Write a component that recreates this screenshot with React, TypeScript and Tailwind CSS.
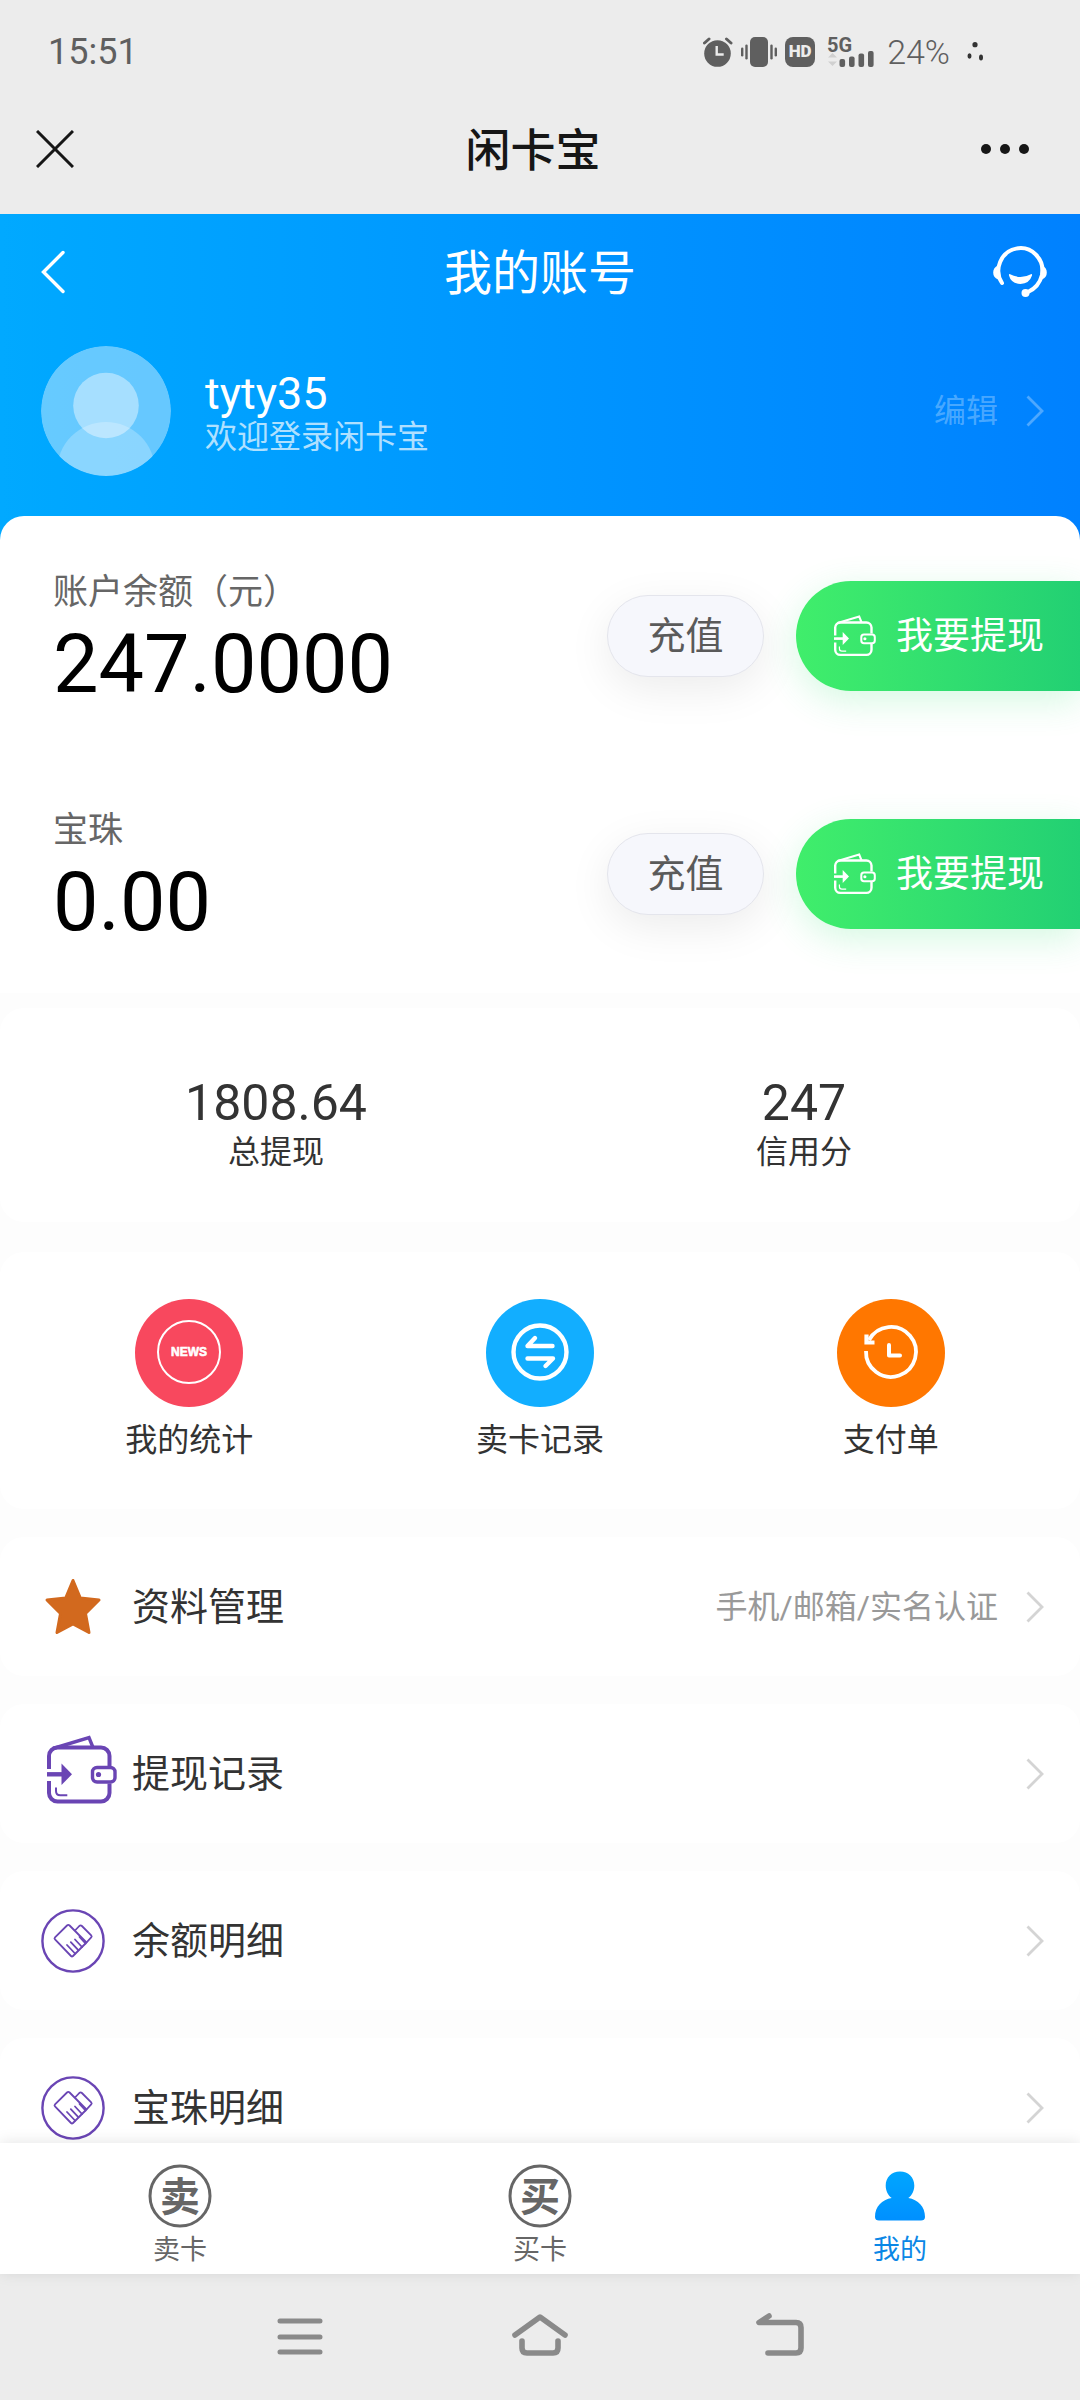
import React from 'react';
import { clsx } from 'clsx';

type IconProps = { className?: string };

function WalletIcon({ className }: IconProps) {
  return (
    <svg viewBox="0 0 70 70" fill="none" stroke="currentColor" strokeWidth="4" className={className}>
      <path d="M2 34V21a8.500 8.500 0 0 1 8.500-8.500H54a8.500 8.500 0 0 1 8.500 8.500v10M62.500 48.500V58a8.500 8.500 0 0 1-8.500 8.500H10.500A8.500 8.500 0 0 1 2 58V46" />
      <path d="M6 13.500 42 2.500l4 10" strokeWidth="3.400" />
      <path d="M0 39.300h17" strokeWidth="4.400" />
      <path d="M14.500 28.500 25 39.300 14.500 50z" fill="currentColor" stroke="none" />
      <rect x="45.500" y="32.500" width="22.500" height="14.500" rx="4.500" strokeWidth="3.400" />
      <circle cx="51.500" cy="39.500" r="2.600" fill="currentColor" stroke="none" />
      <path d="M9 52.500v3.500q0 4.300 4.300 4.300h7" strokeWidth="2" />
    </svg>
  );
}

function HandshakeIcon({ className }: IconProps) {
  return (
    <svg viewBox="0 0 64 64" fill="none" stroke="currentColor" strokeWidth="1.800" strokeLinejoin="round" className={className}>
      <circle cx="32" cy="32" r="30.600" strokeWidth="2.400" />
      <path d="M14 28.300 26 16.500q1.300-1.200 2.600 0L45.500 33.500 32 47q-1 1-2 0L14 30.300q-1-1 0-2z" />
      <path d="M34 21.500 38.300 17q1.300-1.200 2.600 0l9.300 9.300q1 1 0 2L45.500 33.500" />
      <path d="M26 36l8 8.500M29.800 33.200l7.500 8M34 30.500l7 7.500M38.500 28l6 6.500" strokeLinecap="round" />
    </svg>
  );
}

function StarIcon({ className }: IconProps) {
  return (
    <svg viewBox="0 0 64 64" fill="currentColor" stroke="currentColor" strokeWidth="3" strokeLinejoin="round" className={className}>
      <path d="M32 5.500 39.300 23 58 25 44.500 38.500 48 57.500 32 49 16 57.500 19.500 38.500 6 25 24.700 23z" />
    </svg>
  );
}

function ChevronRight({ className }: IconProps) {
  return (
    <svg viewBox="0 0 18 32" fill="none" stroke="currentColor" strokeWidth="2.800" className={clsx('h-8 w-[18px] shrink-0', className)}>
      <path d="M1.500 1.500 16 16 1.500 30.500" />
    </svg>
  );
}

function HeadsetIcon() {
  return (
    <svg viewBox="0 0 56 52" fill="none" stroke="currentColor" strokeWidth="4" strokeLinecap="round" className="h-[52px] w-14">
      <path d="M10 37A22 22.500 0 1 1 50 29Q47 41 36 46" />
      <path d="M6 19.500a7.500 7.500 0 0 0 0 14l2 2V18zM50 19.500a7.500 7.500 0 0 1 0 14l-2 2 1-17z" fill="currentColor" stroke="none" />
      <circle cx="33.500" cy="47" r="4" fill="currentColor" stroke="none" />
      <path d="M17.500 28Q28.500 34 39.500 28q.8 0 .5 1.500Q37.500 37.500 28.500 38 19 37.500 17 29.500q-.3-1.500.5-1.500z" fill="currentColor" stroke="none" />
    </svg>
  );
}

function StatusBar() {
  return (
    <div className="flex h-[84px] items-center justify-between pt-5 pr-24 pl-12 text-[#5f5f5f]">
      <span className="text-[36px] leading-none">15:51</span>
      <div className="flex items-center gap-2">
        <svg viewBox="0 0 30 30" fill="none" className="h-[30px] w-[30px]">
          <circle cx="14.500" cy="16.500" r="13.300" fill="currentColor" />
          <path d="M1.500 6 6 2M28 6l-4.500-4" stroke="currentColor" strokeWidth="3" strokeLinecap="round" />
          <path d="M13.700 9v8.500h7" stroke="#ececec" strokeWidth="2.400" />
        </svg>
        <svg viewBox="0 0 36 30" fill="currentColor" className="h-[30px] w-9">
          <rect x="9" width="18" height="30" rx="5" />
          <rect x="4.300" y="7.500" width="2.400" height="15" rx="1.200" />
          <rect y="10.500" width="2.400" height="9" rx="1.200" />
          <rect x="29.300" y="7.500" width="2.400" height="15" rx="1.200" />
          <rect x="33.600" y="10.500" width="2.400" height="9" rx="1.200" />
        </svg>
        <span className="flex h-[30px] w-[30px] items-center justify-center rounded-lg bg-[#5f5f5f] text-[17px] font-black text-[#ececec]">
          HD
        </span>
        <svg viewBox="0 -8 48 46" fill="currentColor" className="ml-1 h-[46px] w-12">
          <text x="0" y="14.500" fontSize="20" fontWeight="700">5G</text>
          <path d="m5.500 16 4.500 4.500H1zM5.500 29 1 24.500h9z" fill="#d0d0d0" />
          <rect x="12.500" y="22" width="5.600" height="8" rx="2" />
          <rect x="22" y="19.500" width="5.600" height="10.500" rx="2" />
          <rect x="31.500" y="16.500" width="5.600" height="13.500" rx="2" />
          <rect x="41" y="14" width="5.600" height="16" rx="2" />
        </svg>
        <span className="ml-1 text-[34px] leading-none font-light">24%</span>
        <svg viewBox="0 0 18 20" fill="#333" className="ml-2 h-5 w-[18px]">
          <circle cx="9" cy="2.700" r="2.600" />
          <ellipse cx="3.500" cy="14" rx="2" ry="2.700" />
          <ellipse cx="15" cy="15.500" rx="2" ry="3" />
        </svg>
      </div>
    </div>
  );
}

function TitleBar() {
  return (
    <div className="grid h-[130px] grid-cols-[1fr_auto_1fr] items-center pr-[50px] pl-9 text-[#161616]">
      <button type="button" aria-label="关闭" className="justify-self-start">
        <svg viewBox="0 0 38 38" stroke="currentColor" strokeWidth="3" className="h-[38px] w-[38px]">
          <path d="M1 1l36 36M37 1 1 37" />
        </svg>
      </button>
      <span className="pt-1 text-[45px] leading-none font-medium">闲卡宝</span>
      <button type="button" aria-label="更多" className="justify-self-end">
        <svg viewBox="0 0 50 12" fill="currentColor" className="h-3 w-[50px]">
          <circle cx="6" cy="6" r="5" />
          <circle cx="25" cy="6" r="5" />
          <circle cx="44" cy="6" r="5" />
        </svg>
      </button>
    </div>
  );
}

function AccountHeader() {
  return (
    <header className="bg-linear-to-r from-[#01a9ff] to-[#0081ff] pb-16 text-white">
      <div className="grid h-[116px] grid-cols-[1fr_auto_1fr] items-center px-8">
        <button type="button" aria-label="返回" className="justify-self-start">
          <svg viewBox="0 0 56 44" fill="none" stroke="currentColor" strokeWidth="3.400" strokeLinecap="round" className="h-11 w-14">
            <path d="M31 2.500 11.500 22 31 41.500" />
          </svg>
        </button>
        <h1 className="pt-1 text-[48px] leading-none">我的账号</h1>
        <button type="button" aria-label="客服" className="justify-self-end">
          <HeadsetIcon />
        </button>
      </div>
      <div className="flex items-center pt-4 pr-9 pl-[41px]">
        <svg viewBox="0 0 130 130" className="h-[130px] w-[130px] shrink-0">
          <clipPath id="avatar"><circle cx="65" cy="65" r="65" /></clipPath>
          <g clipPath="url(#avatar)" fill="#fff">
            <circle cx="65" cy="65" r="65" fillOpacity=".4" />
            <circle cx="65" cy="59.500" r="32.800" fillOpacity=".42" />
            <circle cx="65" cy="125" r="49" fillOpacity=".24" />
          </g>
        </svg>
        <div className="ml-[34px] flex-1 pt-2">
          <p className="text-[45px] leading-[44px]">tyty35</p>
          <p className="text-[32px] leading-[42px] text-white/70">欢迎登录闲卡宝</p>
        </div>
        <a href="#edit" className="flex items-center gap-7 text-[32px] text-white/30">
          编辑
          <ChevronRight />
        </a>
      </div>
    </header>
  );
}

const balances = [
  { label: '账户余额（元）', amount: '247.0000' },
  { label: '宝珠', amount: '0.00' },
];

function Balances() {
  return (
    <section className="relative -mt-6 rounded-t-3xl bg-white pt-px">
      {balances.map((item) => (
        <div key={item.label} className="flex h-[238px] items-center">
          <div className="flex-1 pt-2 pl-[53px]">
            <p className="pt-px text-[35px] leading-[48px] text-[#666]">{item.label}</p>
            <p className="text-[81px] leading-[96px] text-black">{item.amount}</p>
          </div>
          <button
            type="button"
            className="mr-8 h-[82px] w-[157px] rounded-full border border-[#e4e5ec] bg-[#f6f7fc] text-[38px] leading-none text-[#5a5a5a] shadow-[0_12px_44px_rgba(0,0,0,0.08)]"
          >
            充值
          </button>
          <button
            type="button"
            className="flex h-[110px] items-center gap-5 rounded-l-full bg-linear-to-r from-[#40ee6b] to-[#22d073] pr-9 pl-[38px] text-[37px] leading-none text-white shadow-[0_10px_36px_rgba(46,224,110,0.2)]"
          >
            <WalletIcon className="h-[42px] w-[42px]" />
            我要提现
          </button>
        </div>
      ))}
    </section>
  );
}

const stats = [
  { label: '总提现', value: '1808.64' },
  { label: '信用分', value: '247' },
];

function Stats() {
  return (
    <section className="mt-[15px] grid grid-cols-2 rounded-3xl bg-white px-3 pt-[67px] pb-[49px] text-center text-[#333]">
      {stats.map((item) => (
        <div key={item.label}>
          <p className="text-[50px] leading-[56px]">{item.value}</p>
          <p className="text-[32px] leading-[42px]">{item.label}</p>
        </div>
      ))}
    </section>
  );
}

const shortcuts = [
  {
    label: '我的统计',
    color: 'bg-[#f8485e]',
    icon: (
      <>
        <circle cx="54" cy="53" r="31" strokeWidth="2" />
        <text x="54" y="57" textAnchor="middle" fontSize="12" fontWeight="700" fill="#fff" stroke="#fff" strokeWidth=".6" className="font-['Liberation_Sans',sans-serif]">
          NEWS
        </text>
      </>
    ),
  },
  {
    label: '卖卡记录',
    color: 'bg-[#12aeff]',
    icon: (
      <>
        <circle cx="54" cy="53" r="26.500" strokeWidth="4.400" />
        <path d="M66.500 47H41.500L49 39M41.500 59.500H67L59.500 67" strokeWidth="4.400" />
      </>
    ),
  },
  {
    label: '支付单',
    color: 'bg-[#ff7700]',
    icon: (
      <>
        <path d="M29 52A25 25 0 1 0 32 41" strokeWidth="3.800" strokeLinecap="butt" />
        <path d="M29.500 35.500v8h8" strokeWidth="4.200" strokeLinecap="butt" strokeLinejoin="miter" />
        <path d="M52 46v10.500h11" strokeWidth="4" />
      </>
    ),
  },
];

function Shortcuts() {
  return (
    <section className="mt-[30px] grid grid-cols-3 rounded-3xl bg-white px-[14px] pt-[47px] pb-12">
      {shortcuts.map((item) => (
        <a key={item.label} href="#shortcut" className="flex flex-col items-center gap-3 text-[#333]">
          <span className={clsx('rounded-full', item.color)}>
            <svg viewBox="0 0 108 108" fill="none" stroke="#fff" strokeLinecap="round" strokeLinejoin="round" className="h-[108px] w-[108px]">
              {item.icon}
            </svg>
          </span>
          <span className="text-[32px] leading-[42px]">{item.label}</span>
        </a>
      ))}
    </section>
  );
}

const menu = [
  { label: '资料管理', detail: '手机/邮箱/实名认证', icon: <StarIcon className="h-16 w-16 text-[#d2691e]" /> },
  { label: '提现记录', icon: <WalletIcon className="mb-2 ml-1.5 h-[70px] w-[70px] text-[#6a45b4]" /> },
  { label: '余额明细', icon: <HandshakeIcon className="h-16 w-16 text-[#6a45b4]" /> },
  { label: '宝珠明细', icon: <HandshakeIcon className="h-16 w-16 text-[#6a45b4]" /> },
];

function Menu() {
  return (
    <nav className="mt-7 flex flex-col gap-7">
      {menu.map((item) => (
        <a key={item.label} href="#menu" className="flex h-[139px] shrink-0 items-center rounded-3xl bg-white pr-9 pl-[41px]">
          <span className="w-[91px] shrink-0">{item.icon}</span>
          <span className="flex-1 text-[38px] leading-none text-[#333]">{item.label}</span>
          <span className="mr-7 text-[32px] leading-none text-[#999]">{item.detail}</span>
          <ChevronRight className="text-[#d4d4d4]" />
        </a>
      ))}
    </nav>
  );
}

function CoinIcon({ char }: { char: string }) {
  return (
    <svg viewBox="0 0 64 64" className="h-16 w-16">
      <circle cx="32" cy="32" r="30" fill="none" stroke="currentColor" strokeWidth="3" />
      <text x="32" y="46.500" textAnchor="middle" fontSize="40" fontWeight="700" fill="currentColor">{char}</text>
    </svg>
  );
}

const tabs = [
  { label: '卖卡', icon: <CoinIcon char="卖" /> },
  { label: '买卡', icon: <CoinIcon char="买" /> },
  {
    label: '我的',
    active: true,
    icon: (
      <svg viewBox="0 0 64 64" className="h-16 w-16">
        <linearGradient id="person" x1="0" y1="0" x2="0" y2="1">
          <stop offset="0" stopColor="#00a6ff" />
          <stop offset="1" stopColor="#0090ff" />
        </linearGradient>
        <path
          d="M32 7.500c8.500 0 14.300 6 14.300 14 0 5.300-2.300 9.800-6 12.500C50 35.500 57 42.500 57 53c0 2.500-1.500 3.500-4 3.500H11c-2.500 0-4-1-4-3.500 0-10.500 7-17.500 16.700-19-3.700-2.700-6-7.200-6-12.500 0-8 5.800-14 14.300-14z"
          fill="url(#person)"
        />
      </svg>
    ),
  },
];

function TabBar() {
  return (
    <nav className="relative grid grid-cols-3 bg-white pt-[21px] pb-1.5 shadow-[0_-1px_14px_rgba(0,0,0,0.1)]">
      {tabs.map((tab) => (
        <a
          key={tab.label}
          href="#tab"
          className={clsx('flex flex-col items-center gap-1', tab.active ? 'text-[#0a87e6]' : 'text-[#666]')}
        >
          {tab.icon}
          <span className="text-[27px] leading-9">{tab.label}</span>
        </a>
      ))}
    </nav>
  );
}

function SystemNav() {
  return (
    <div className="bg-[#ececec] text-[#8a8a8a]">
      <div className="mx-auto grid h-[126px] w-2/3 grid-cols-3 place-items-center pb-1">
        <button type="button" aria-label="最近任务">
          <svg viewBox="0 0 48 44" stroke="currentColor" strokeWidth="5" strokeLinecap="round" className="h-11 w-12">
            <path d="M4 8h40M4 24h40M4 39h40" />
          </svg>
        </button>
        <button type="button" aria-label="主屏幕">
          <svg viewBox="0 0 58 44" fill="none" stroke="currentColor" strokeWidth="5.600" strokeLinecap="round" strokeLinejoin="round" className="h-11 w-[58px]">
            <path d="M4 22 29 4l25 18M11 28v7q0 5 5 5h26q5 0 5-5v-7" />
          </svg>
        </button>
        <button type="button" aria-label="返回上一级">
          <svg viewBox="0 0 50 44" fill="none" stroke="currentColor" strokeWidth="5.600" strokeLinecap="round" strokeLinejoin="round" className="h-11 w-[50px]">
            <path d="M14 3 4 9.500h37q5 0 5 5V35q0 5-5 5H13" />
          </svg>
        </button>
      </div>
    </div>
  );
}

export default function App() {
  return (
    <div className="flex h-screen flex-col overflow-hidden bg-[#fdfdfd] font-['Roboto','Noto_Sans_CJK_SC',sans-serif]">
      <div className="bg-[#ececec]">
        <StatusBar />
        <TitleBar />
      </div>
      <main className="min-h-0 flex-1 overflow-y-auto [scrollbar-width:none]">
        <AccountHeader />
        <Balances />
        <Stats />
        <Shortcuts />
        <Menu />
      </main>
      <TabBar />
      <SystemNav />
    </div>
  );
}
